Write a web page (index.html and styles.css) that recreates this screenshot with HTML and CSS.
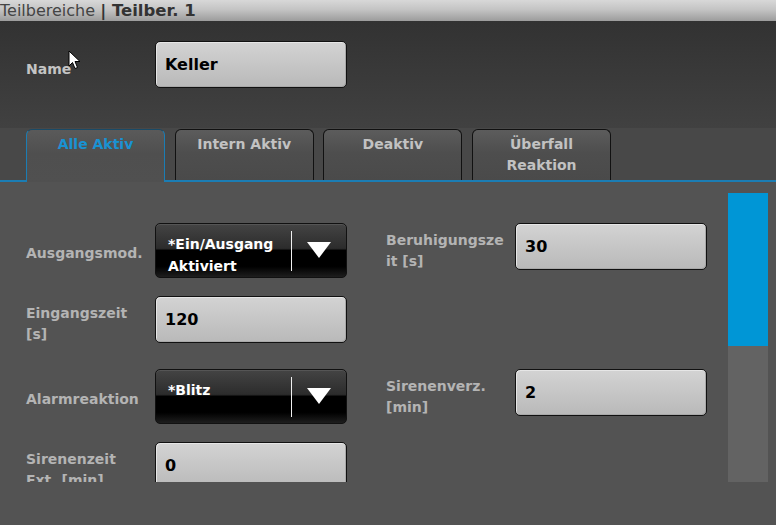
FILE: index.html
```html
<!DOCTYPE html>
<html lang="de">
<head>
<meta charset="utf-8">
<title>Teilbereiche</title>
<link rel="stylesheet" href="styles.css">
</head>
<body>
<div class="screen">
  <div class="titlebar"><span class="t-normal">Teilbereiche</span> <span class="t-bold">| Teilber. 1</span></div>
  <div class="header">
    <div class="name-lbl">Name</div>
    <div class="field">Keller</div>
  </div>
  <div class="tabs">
    <div class="tab active">Alle Aktiv</div>
    <div class="tab">Intern Aktiv</div>
    <div class="tab">Deaktiv</div>
    <div class="tab">Überfall<br>Reaktion</div>
  </div>
  <div class="panel">
    <div class="scrollview">
      <div class="grid">
        <div class="lbl one">Ausgangsmod.</div>
        <div class="select"><div class="sel-text">*Ein/Ausgang Aktiviert</div><div class="sel-div"></div><div class="sel-arrow"></div></div>
        <div class="spacer"></div>
        <div class="lbl">Beruhigungszeit [s]</div>
        <div class="field">30</div>

        <div class="lbl">Eingangszeit [s]</div>
        <div class="field">120</div>
        <div class="spacer"></div>
        <div class="lbl"></div>
        <div></div>

        <div class="lbl one">Alarmreaktion</div>
        <div class="select"><div class="sel-text">*Blitz</div><div class="sel-div"></div><div class="sel-arrow"></div></div>
        <div class="spacer"></div>
        <div class="lbl">Sirenenverz. [min]</div>
        <div class="field">2</div>

        <div class="lbl">Sirenenzeit Ext. [min]</div>
        <div class="field">0</div>
      </div>
    </div>
    <div class="scrollbar"><div class="thumb"></div></div>
  </div>
  <svg class="cursor" width="13" height="20" viewBox="0 0 13 20"><path d="M1 1 L1 16 L4.5 12.5 L7 18.5 L9.5 17.5 L7 11.5 L12 11.5 Z" fill="#fff" stroke="#000" stroke-width="1" stroke-linejoin="round"/></svg>
</div>
</body>
</html>
```
FILE: styles.css
```css
* { box-sizing: border-box; }
html, body { margin: 0; padding: 0; }
body {
  width: 776px;
  height: 525px;
  overflow: hidden;
  background: #535353;
  font-family: "DejaVu Sans", Verdana, sans-serif;
}
.screen { position: relative; width: 776px; height: 525px; }

.titlebar {
  height: 21px;
  line-height: 21px;
  font-size: 16px;
  color: #3a3a3a;
  background: linear-gradient(#d8d8d8, #c4c4c4 45%, #9c9c9c);
  white-space: nowrap;
}
.t-normal { font-weight: normal; color: #444; }
.t-bold { font-weight: bold; color: #333; font-size: 16.5px; }

.header {
  height: 107px;
  background: linear-gradient(#323232, #414141);
  display: flex;
  align-items: flex-start;
  padding: 20px 0 0 26px;
}
.name-lbl {
  width: 129px;
  margin-top: 18px;
  font-size: 14px;
  font-weight: bold;
  line-height: 21px;
  color: #c4c4c4;
}

.lbl {
  font-size: 14px;
  font-weight: bold;
  line-height: 21px;
  color: #b4b4b4;
  width: 120px;
  overflow-wrap: anywhere;
}
.lbl.one { padding-top: 6px; }

.field {
  width: 192px;
  height: 47px;
  border: 1px solid #111;
  border-radius: 5px;
  background: linear-gradient(#d3d3d3, #c6c6c6 50%, #b9b9b9);
  box-shadow: inset 1px 1px 0 #e6e6e6, inset -1px -1px 0 #a8a8a8;
  font-size: 16px;
  font-weight: bold;
  color: #000;
  display: flex;
  align-items: center;
  padding-left: 9px;
  padding-bottom: 1px;
}

.tabs {
  height: 54px;
  background: #484848;
  border-bottom: 2px solid #1b7db4;
  display: flex;
  align-items: flex-end;
  gap: 9.67px;
  padding-left: 26px;
}
.tab {
  width: 139px;
  height: 51px;
  border: 1px solid #111;
  border-bottom: none;
  border-radius: 6px 6px 0 0;
  background: linear-gradient(#5c5c5c, #4e4e4e 45%, #4a4a4a);
  color: #c2c2c2;
  font-size: 14px;
  font-weight: bold;
  line-height: 21px;
  text-align: center;
  padding-top: 4px;
}
.tab.active {
  height: 53px;
  margin-bottom: -2px;
  border-color: #1b7db4;
  border-top-color: #1a4a66;
  color: #1992d2;
  background: linear-gradient(#5a5a5a, #4f4f4f 45%, #505050);
}

.panel {
  display: flex;
  height: 343px;
}
.scrollview {
  flex: 1;
  height: 300px;
  overflow: hidden;
}
.grid {
  display: grid;
  grid-template-columns: 129px 192px 39px 129px 192px;
  grid-auto-rows: 55px;
  row-gap: 18px;
  padding: 41px 0 0 26px;
}
.grid .lbl { align-self: center; }
.grid .field { align-self: start; }

.select {
  width: 192px;
  height: 55px;
  border: 1px solid #111;
  border-radius: 5px;
  background: linear-gradient(#444 0%, #2c2c2c 46%, #000 50%, #000 80%, #1e1e1e 100%);
  box-shadow: inset 0 1px 0 #555;
  display: flex;
  align-items: flex-start;
}
.sel-text {
  width: 135px;
  padding: 9px 0 0 12px;
  font-size: 14px;
  font-weight: bold;
  line-height: 22px;
  color: #fff;
}
.sel-div {
  width: 1px;
  height: 40px;
  margin-top: 7px;
  background: #f0f0f0;
}
.sel-arrow {
  width: 0;
  height: 0;
  margin: 18px 0 0 15px;
  border-left: 12px solid transparent;
  border-right: 12px solid transparent;
  border-top: 16px solid #fff;
}

.scrollbar {
  width: 40px;
  height: 289px;
  margin: 11px 8px 0 0;
  background: #636363;
}
.thumb {
  height: 153px;
  background: #0096d6;
}

.cursor {
  position: absolute;
  left: 68px;
  top: 50px;
}
```
